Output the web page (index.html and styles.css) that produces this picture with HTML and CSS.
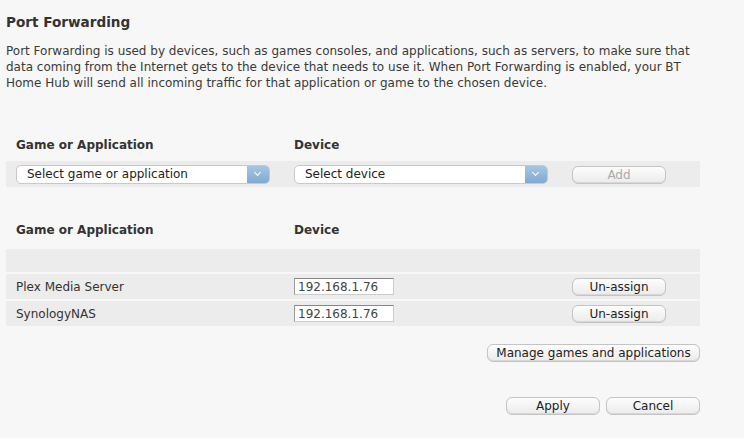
FILE: index.html
```html
<!DOCTYPE html>
<html lang="en">
<head>
  <meta charset="UTF-8" />
  <title>Port Forwarding</title>
  <link rel="stylesheet" href="styles.css">
</head>
<body>

<div class="panel">
  <h2>Port Forwarding</h2>
  <p class="intro">Port Forwarding is used by devices, such as games consoles, and applications, such as servers, to make sure that data coming from the Internet gets to the device that needs to use it. When Port Forwarding is enabled, your BT Home Hub will send all incoming traffic for that application or game to the chosen device.</p>

  <div class="grid head first">
    <div>Game or Application</div>
    <div>Device</div>
    <div></div>
  </div>
  <div class="grid band add-row">
    <div><div class="select"><span>Select game or application</span><i class="arrow"></i></div></div>
    <div><div class="select"><span>Select device</span><i class="arrow"></i></div></div>
    <div><button type="button" class="btn" disabled>Add</button></div>
  </div>

  <div class="grid head second">
    <div>Game or Application</div>
    <div>Device</div>
    <div></div>
  </div>
  <div class="band empty"></div>
  <div class="grid band entry">
    <div>Plex Media Server</div>
    <div><input type="text" class="ip" value="192.168.1.76"></div>
    <div><button type="button" class="btn">Un-assign</button></div>
  </div>
  <div class="grid band entry">
    <div>SynologyNAS</div>
    <div><input type="text" class="ip" value="192.168.1.76"></div>
    <div><button type="button" class="btn">Un-assign</button></div>
  </div>

  <div class="actions manage">
    <button type="button" class="btn wide">Manage games and applications</button>
  </div>
  <div class="actions footer">
    <button type="button" class="btn">Apply</button>
    <button type="button" class="btn">Cancel</button>
  </div>
</div>

</body>
</html>
```

FILE: styles.css
```css
body {
  margin: 0;
  background: #f7f7f7;
  font-family: "DejaVu Sans", Verdana, sans-serif;
  color: #333;
}
.panel { width: 694px; padding: 12px 0 0 6px; }
h2 { font-size: 13.6px; margin: 0 0 11px; color: #333; line-height: 20px; }
.intro { font-size: 12px; line-height: 16px; margin: 0; color: #3a3a3a; }

.grid {
  display: grid;
  grid-template-columns: 278px 278px 1fr;
  padding-left: 10px;
  align-items: center;
}
.head { font-weight: bold; font-size: 12px; height: 20px; color: #333; }
.head.first { margin-top: 44px; }
.head.second { margin-top: 33px; }
.band { background: #ececec; }
.add-row { height: 26px; margin-top: 6px; }
.empty { height: 23px; margin-top: 9px; }
.entry { height: 25px; margin-top: 2px; font-size: 12px; }

.select {
  width: 254px; height: 19px;
  background: #fff;
  border: 1px solid #c8c8c8;
  border-radius: 5px;
  box-sizing: border-box;
  display: flex; align-items: center;
  font-size: 12px; color: #222;
  overflow: hidden;
}
.select span { flex: 1; padding-left: 10px; }
.arrow {
  width: 22px; height: 100%;
  background: linear-gradient(#a6c6e2, #7faad2);
  position: relative;
}
.arrow::after {
  content: "";
  position: absolute; left: 8px; top: 4px;
  width: 4px; height: 4px;
  border-right: 1.5px solid #fff; border-bottom: 1.5px solid #fff;
  transform: rotate(45deg);
}

.btn {
  font-family: inherit; font-size: 12px; color: #222;
  width: 94px; height: 18px; padding: 0;
  border: 1px solid #c4c4c4;
  border-radius: 6px;
  background: linear-gradient(#fdfdfd, #ebebeb);
  box-shadow: inset 0 -1px 0 #d8d8d8;
}
.btn:disabled { color: #aaa; }
.btn.wide { width: 213px; }

.ip {
  width: 100px; height: 17px;
  box-sizing: border-box;
  border: 1px solid #ccc; border-top-color: #888; border-left-color: #999;
  font-family: inherit; font-size: 12px; color: #444;
  padding: 0 3px;
  background: #fff;
}

.actions { display: flex; justify-content: flex-end; gap: 6px; }
.manage { margin-top: 18px; }
.footer { margin-top: 35px; }
```
